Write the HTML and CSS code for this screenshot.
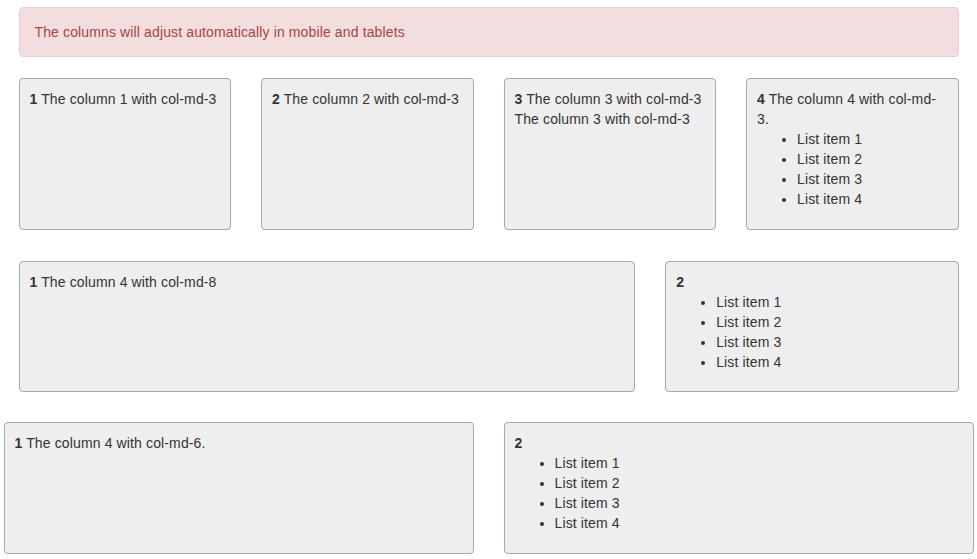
FILE: index.html
```html
<!DOCTYPE html>
<html>
<head>
<meta charset="utf-8">
<link rel="stylesheet" href="styles.css">
</head>
<body>
<div class="container">
  <div class="padded">
    <div class="alert">The columns will adjust automatically in mobile and tablets</div>
    <div class="row row1">
      <div class="box"><b>1</b> The column 1 with col-md-3</div>
      <div class="box"><b>2</b> The column 2 with col-md-3</div>
      <div class="box"><b>3</b> The column 3 with col-md-3 The column 3 with col-md-3</div>
      <div class="box"><b>4</b> The column 4 with col-md-3.
        <ul><li>List item 1</li><li>List item 2</li><li>List item 3</li><li>List item 4</li></ul>
      </div>
    </div>
    <div class="row row2">
      <div class="box wide8"><b>1</b> The column 4 with col-md-8</div>
      <div class="box wide4"><b>2</b>
        <ul><li>List item 1</li><li>List item 2</li><li>List item 3</li><li>List item 4</li></ul>
      </div>
    </div>
  </div>
  <div class="row row3">
    <div class="box"><b>1</b> The column 4 with col-md-6.</div>
    <div class="box"><b>2</b>
      <ul><li>List item 1</li><li>List item 2</li><li>List item 3</li><li>List item 4</li></ul>
    </div>
  </div>
</div>
</body>
</html>
```
FILE: styles.css
```css
html, body {
  margin: 0;
  padding: 0;
  background: #fff;
}
body {
  font-family: "Liberation Sans", Arial, Helvetica, sans-serif;
  font-size: 14px;
  line-height: 20px;
  letter-spacing: 0.13px;
  color: #333;
}
.container {
  width: 970px;
  margin: 0 auto;
  padding-top: 7px;
}
.padded {
  padding: 0 15px;
}
.alert {
  background: #f2dede;
  border: 1px solid #ebccd1;
  color: #a94442;
  border-radius: 4px;
  padding: 14px 15px;
  margin-bottom: 21px;
}
.row {
  display: flex;
  gap: 30px;
}
.box {
  box-sizing: border-box;
  background: #eeeeee;
  border: 1px solid #a9a9a9;
  border-radius: 4px;
  padding: 10px;
  box-shadow: 0 0 1px rgba(0,0,0,0.08);
}
.box b {
  font-weight: bold;
}
.box ul {
  margin: 0;
  padding-left: 40px;
}
.row1 {
  margin-bottom: 31px;
}
.row1 .box {
  flex: 1 1 0;
  height: 152px;
}
.row2 {
  margin-bottom: 30px;
}
.row2 .box {
  height: 131px;
}
.wide8 {
  flex: 0 0 616.67px;
}
.wide4 {
  flex: 1 1 0;
}
.row3 .box {
  flex: 1 1 0;
  height: 132px;
}
```
